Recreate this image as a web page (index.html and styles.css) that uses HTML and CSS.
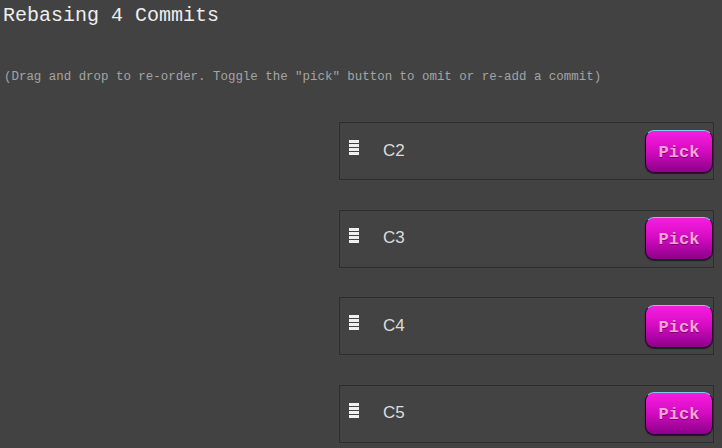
FILE: index.html
```html
<!DOCTYPE html>
<html>
<head>
<meta charset="utf-8">
<link rel="stylesheet" href="styles.css">
</head>
<body>
<div class="page">
  <h1 class="title">Rebasing 4 Commits</h1>
  <p class="hint">(Drag and drop to re-order. Toggle the "pick" button to omit or re-add a commit)</p>
  <ul class="list">
    <li class="item"><span class="handle"><span class="bar"></span><span class="bar"></span><span class="bar"></span><span class="bar"></span></span><span class="name">C2</span><button class="pick">Pick</button></li>
    <li class="item"><span class="handle"><span class="bar"></span><span class="bar"></span><span class="bar"></span><span class="bar"></span></span><span class="name">C3</span><button class="pick">Pick</button></li>
    <li class="item"><span class="handle"><span class="bar"></span><span class="bar"></span><span class="bar"></span><span class="bar"></span></span><span class="name">C4</span><button class="pick">Pick</button></li>
    <li class="item"><span class="handle"><span class="bar"></span><span class="bar"></span><span class="bar"></span><span class="bar"></span></span><span class="name">C5</span><button class="pick">Pick</button></li>
  </ul>
</div>
</body>
</html>
```
FILE: styles.css
```css
html, body {
  margin: 0;
  padding: 0;
  background: #424242;
  height: 100%;
  overflow: hidden;
}
.page {
  display: flex;
  flex-direction: column;
  padding: 0 8px 0 3px;
  font-family: "Liberation Mono", "Courier New", monospace;
}
.title {
  margin: 4px 0 0 0;
  font-size: 20px;
  line-height: 24px;
  font-weight: normal;
  color: #eeeeee;
}
.hint {
  margin: 41px 0 0 1px;
  font-size: 12.45px;
  line-height: 16px;
  color: #a4a4a4;
}
.list {
  list-style: none;
  margin: 37px 0 0 0;
  padding: 0;
  display: flex;
  flex-direction: column;
  align-items: flex-end;
  gap: 29.5px;
}
.item {
  box-sizing: border-box;
  width: 375px;
  height: 58px;
  border: 1px solid #2c2c2c;
  box-shadow: 0 0 1px #555;
  background: #434343;
  display: flex;
  align-items: center;
  padding: 0 0 0 9px;
}
.handle {
  flex: none;
  display: flex;
  flex-direction: column;
  gap: 1px;
  width: 10px;
  margin-top: -7px;
}
.bar {
  display: block;
  width: 10px;
  height: 3px;
  background: #f0f0f0;
}
.name {
  margin-left: 24px;
  font-family: "Liberation Sans", Arial, sans-serif;
  font-size: 17px;
  color: #dcdcdc;
  margin-top: -1px;
}
.pick {
  margin-left: auto;
  margin-right: 0;
  width: 68px;
  height: 43px;
  box-sizing: border-box;
  border: 1px solid #2a002a;
  border-top: 1px solid #7ccfe8;
  border-radius: 9px;
  background: linear-gradient(to bottom, #f61ee0 0%, #d80cc4 45%, #8c008a 100%);
  box-shadow: 0 1px 1px #1c1c1c;
  font-family: "Liberation Mono", "Courier New", monospace;
  font-weight: bold;
  font-size: 17px;
  color: #f7a3d8;
  text-shadow: 0 1px 0 #7a0070;
  padding: 2px 0 0 0;
  cursor: pointer;
}
```
